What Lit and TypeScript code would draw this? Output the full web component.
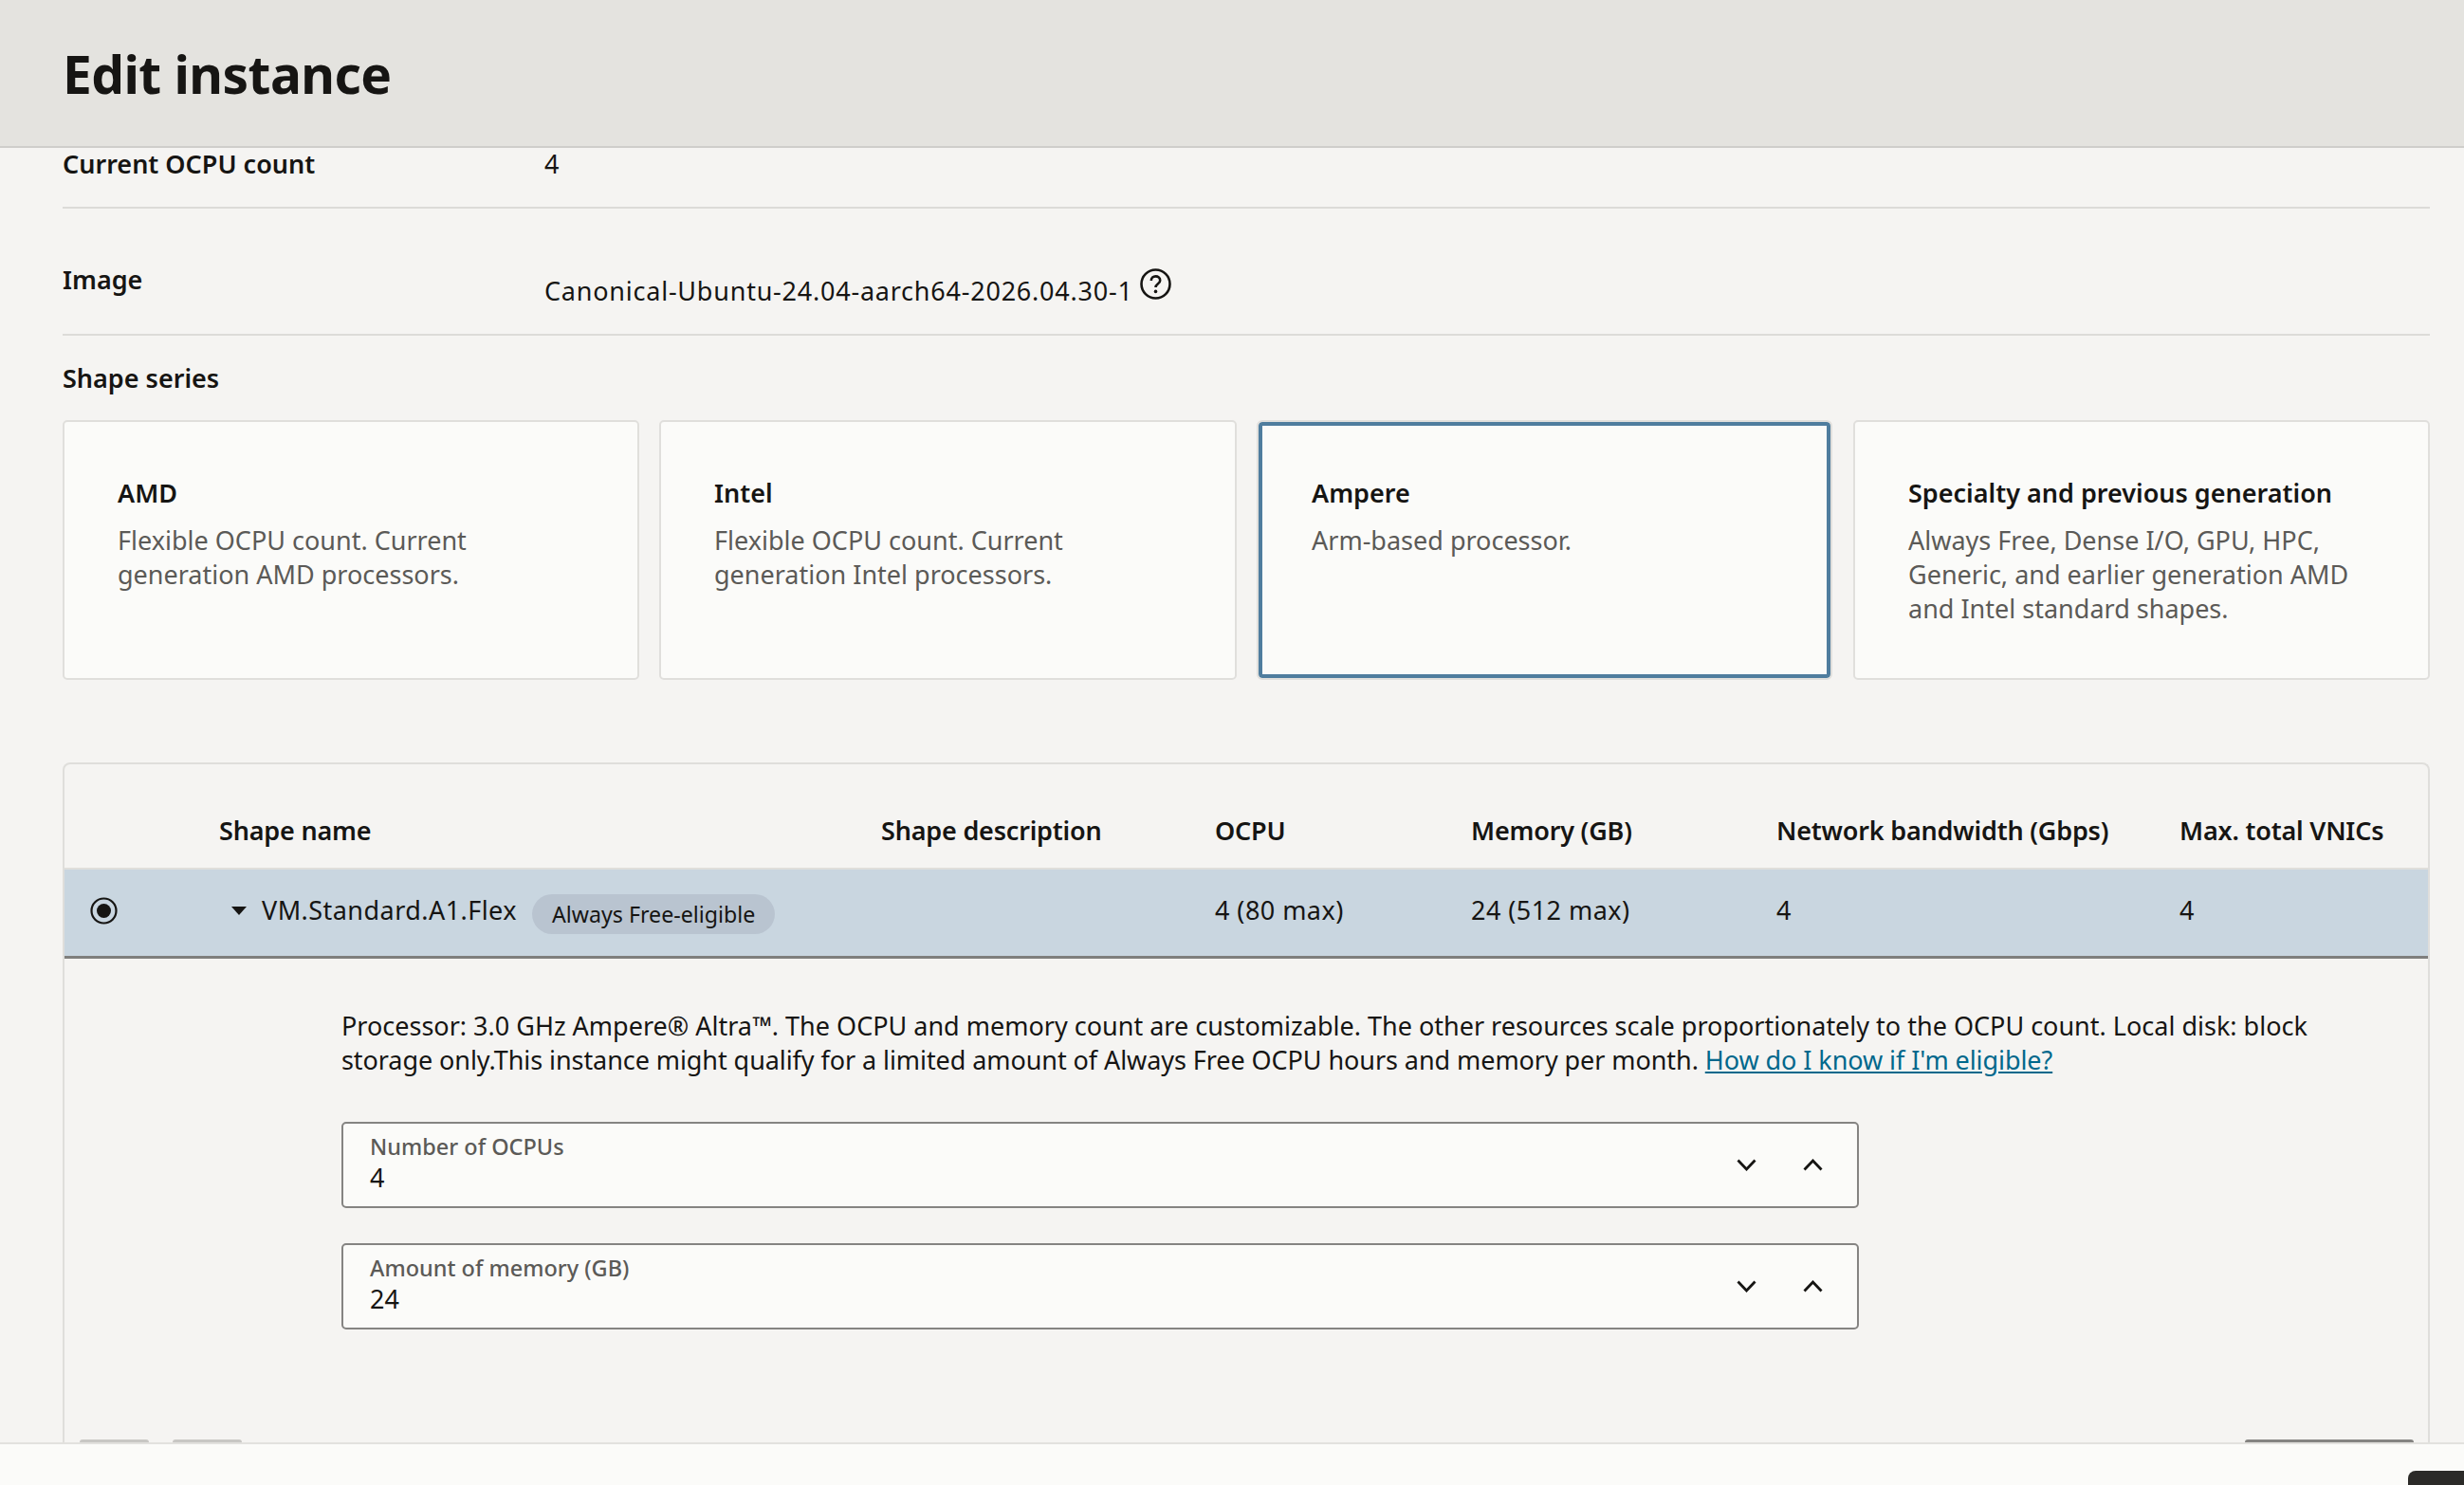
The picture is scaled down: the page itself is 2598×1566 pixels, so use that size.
import { LitElement, html, css } from "lit";
import { customElement } from "lit/decorators.js";

const chevDown = html`<svg class="chev" viewBox="0 0 21 13"><path d="M1.5 1.5 10.5 11l9-9.5" fill="none" stroke="#161513" stroke-width="2.8"/></svg>`;
const chevUp = html`<svg class="chev" viewBox="0 0 21 13"><path d="M1.5 11.5 10.5 2l9 9.5" fill="none" stroke="#161513" stroke-width="2.8"/></svg>`;

@customElement("app-root")
export class AppRoot extends LitElement {
  static styles = css`
    :host {
      display: flex; flex-direction: column; height: 1566px; width: 2598px; overflow: hidden;
      background: #f5f4f2; color: #161513;
      font-family: "Noto Sans", "Open Sans", sans-serif; font-size: 27px; line-height: 36px;
    }
    * { box-sizing: border-box; }
    .head { height: 156px; flex: none; background: #e4e3df; border-bottom: 2px solid #cfcecb; padding: 0 66px; display: flex; align-items: center; }
    h1 { margin: 0 0 -1px; font-size: 55px; line-height: 1; font-weight: 700; letter-spacing: -0.55px; }
    .body { flex: 1; min-height: 0; padding: 0 36px 0 66px; }
    .kv { display: grid; grid-template-columns: 508px 1fr; border-bottom: 2px solid #dcdbd8; }
    .kv b { font-weight: 600; }
    .k1 { height: 64px; align-items: start; line-height: 33px; }
    .k2 { height: 134px; padding-top: 57px; }
    .k2 .v { display: flex; align-items: flex-start; padding-top: 12px; white-space: nowrap; letter-spacing: 0.77px; }
    .help { width: 33px; height: 33px; margin: -6px 0 0 7px; flex: none; }
    .series { font-weight: 600; margin-top: 27px; height: 62px; }
    .cards { display: grid; grid-template-columns: 608px 609px 608px 608px; column-gap: 21px; height: 274px; }
    .card { background: #fbfbf9; border: 2px solid #e0dfdc; border-radius: 5px; padding: 57px 56px 0; }
    .card.sel { border: 4px solid #4f7d9e; outline: 2px solid #e0dfdc; margin: 2px 3px 2px 2px; border-radius: 4px; padding: 53px 52px 0; }
    .card b { display: block; font-weight: 600; color: #161513; }
    .card p { margin: 14px 0 0; color: #5b5a57; }
    .tbl { margin-top: 87px; border: 2px solid #dfdedb; border-bottom: 0; border-radius: 8px 8px 0 0; height: 760px; }
    .grid { display: grid; grid-template-columns: 163px 698px 352px 270px 322px 425px 1fr; align-items: center; white-space: nowrap; }
    .th { height: 111px; font-weight: 600; border-bottom: 2px solid #dfdedb; padding-top: 30px; letter-spacing: -0.2px; }
    .tr { height: 94px; background: #c9d6e0; border-bottom: 3px solid #7f7f7d; padding-bottom: 5px; letter-spacing: 0.45px; }
    .radio { display: flex; padding-left: 27px; }
    .radio svg { width: 29px; height: 29px; }
    .name { display: flex; align-items: center; }
    .tri { width: 0; height: 0; border-left: 8.5px solid transparent; border-right: 8.5px solid transparent; border-top: 9px solid #161513; margin: 0 16px 0 13px; flex: none; }
    .pill { background: #b9c4d0; border-radius: 21px; height: 42px; margin: 7px 0 0 16px; padding: 0 21px; font-size: 23.2px; line-height: 42px; letter-spacing: 0; }
    .detail { padding: 53px 0 0 292px; }
    .detail p { margin: 0; width: 2100px; }
    .line2 { letter-spacing: -0.07px; }
    a { color: #00688c; text-decoration: underline; }
    .field { width: 1600px; height: 91px; background: #fbfbf9; border: 2px solid #858482; border-radius: 5px; padding: 9px 28px 0; display: flex; margin-top: 37px; justify-content: space-between; }
    .first { margin-top: 47px; }
    .lab { font-size: 23.5px; line-height: 30px; color: #5b5a57; font-weight: 500; }
    .val { line-height: 30px; margin-top: 3px; }
    .chevs { display: flex; gap: 49px; align-items: center; margin: -9px 8px 0 0; }
    .chev { width: 21px; height: 13px; display: block; }
    .foot { height: 45px; flex: none; background: #fbfbf9; border-top: 2px solid #e2e1de; position: relative; }
    .peek { position: absolute; top: -5px; height: 3px; border-radius: 5px 5px 0 0; }
    .g1 { left: 84px; width: 73px; background: #c8c7c4; }
    .g2 { left: 182px; width: 73px; background: #c8c7c4; }
    .g3 { left: 2367px; width: 178px; background: #858482; }
    .dark { position: absolute; left: 2539px; top: 28px; width: 59px; height: 20px; background: #2b2a28; border-radius: 8px 0 0 0; }
  `;
  render() {
    const card = (t: string, d: unknown, sel = false) => html`<div class="card ${sel ? "sel" : ""}"><b>${t}</b><p>${d}</p></div>`;
    const field = (l: string, v: string, c: string) => html`<div class="field ${c}"><div><div class="lab">${l}</div><div class="val">${v}</div></div><div class="chevs">${chevDown}${chevUp}</div></div>`;
    return html`
      <div class="head"><h1>Edit instance</h1></div>
      <div class="body">
        <div class="kv k1"><b>Current OCPU count</b><span>4</span></div>
        <div class="kv k2"><b>Image</b><div class="v">Canonical-Ubuntu-24.04-aarch64-2026.04.30-1<svg class="help" viewBox="0 0 33 33"><circle cx="16.5" cy="16.5" r="15" fill="none" stroke="#161513" stroke-width="2.6"/><path d="M11.8 13c0-3 2.2-4.6 4.7-4.6s4.7 1.7 4.7 4.3c0 3.6-4.7 3.4-4.7 7.3" fill="none" stroke="#161513" stroke-width="2.6"/><circle cx="16.5" cy="24.4" r="1.8" fill="#161513"/></svg></div></div>
        <div class="series">Shape series</div>
        <div class="cards">
          ${card("AMD", html`Flexible OCPU count. Current<br>generation AMD processors.`)}
          ${card("Intel", html`Flexible OCPU count. Current<br>generation Intel processors.`)}
          ${card("Ampere", "Arm-based processor.", true)}
          ${card("Specialty and previous generation", html`Always Free, Dense I/O, GPU, HPC,<br>Generic, and earlier generation AMD<br>and Intel standard shapes.`)}
        </div>
        <div class="tbl">
          <div class="grid th"><span></span><span>Shape name</span><span>Shape description</span><span>OCPU</span><span>Memory (GB)</span><span>Network bandwidth (Gbps)</span><span>Max. total VNICs</span></div>
          <div class="grid tr">
            <span class="radio"><svg viewBox="0 0 29 29"><circle cx="14.5" cy="14.5" r="13" fill="none" stroke="#161513" stroke-width="2.2"/><circle cx="14.5" cy="14.5" r="7.5" fill="#161513"/></svg></span>
            <span class="name"><span class="tri"></span>VM.Standard.A1.Flex<span class="pill">Always Free-eligible</span></span>
            <span></span><span>4 (80 max)</span><span>24 (512 max)</span><span>4</span><span>4</span>
          </div>
          <div class="detail">
            <p>Processor: 3.0 GHz Ampere® Altra™. The OCPU and memory count are customizable. The other resources scale proportionately to the OCPU count. Local disk: block <span class="line2">storage only.This instance might qualify for a limited amount of Always Free OCPU hours and memory per month. <a href="#">How do I know if I'm eligible?</a></span></p>
            ${field("Number of OCPUs", "4", "first")}
            ${field("Amount of memory (GB)", "24", "")}
          </div>
        </div>
      </div>
      <div class="foot"><i class="peek g1"></i><i class="peek g2"></i><i class="peek g3"></i><i class="dark"></i></div>
    `;
  }
}
